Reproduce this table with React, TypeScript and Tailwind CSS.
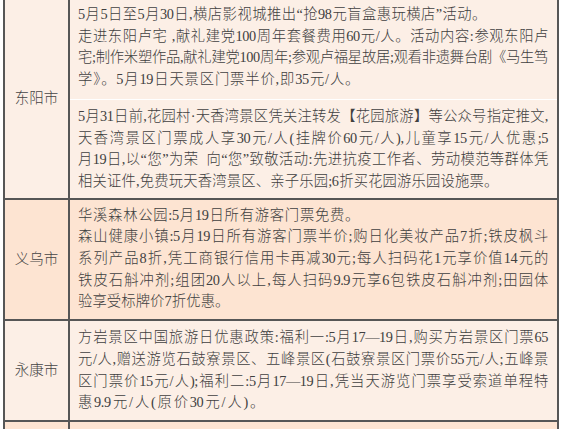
import React from 'react';

// w: width of a short (last) line so that it ends where the printed one ends
type Line = { text: string; full?: boolean; w?: string };

const FONT = '"Liberation Serif", "Noto Sans CJK SC", serif';

function Lines({ lines }: { lines: Line[] }) {
  return (
    <>
      {lines.map((l, i) => (
        <div
          key={i}
          className={`whitespace-nowrap leading-[21.7px] text-justify [text-align-last:justify] tracking-[-0.4px] ${l.w ?? ''}`}
        >
          {l.text}
        </div>
      ))}
    </>
  );
}

const dongyangA: Line[] = [
  { text: '5月5日至5月30日,横店影视城推出“抢98元盲盒惠玩横店”活动。', w: 'w-[408px]' },
  { text: '走进东阳卢宅 ,献礼建党100周年套餐费用60元/人。活动内容:参观东阳卢', full: true },
  { text: '宅;制作米塑作品,献礼建党100周年;参观卢福星故居;观看非遗舞台剧《马生笃', full: true },
  { text: '学》。5月19日天景区门票半价,即35元/人。', w: 'w-[281px]' },
];

const dongyangB: Line[] = [
  { text: '5月31日前,花园村·天香湾景区凭关注转发【花园旅游】等公众号指定推文,', full: true },
  { text: '天香湾景区门票成人享30元/人(挂牌价60元/人),儿童享15元/人优惠;5', full: true },
  { text: '月19日,以“您”为荣\u00a0\u00a0向“您”致敬活动:先进抗疫工作者、劳动模范等群体凭', full: true },
  { text: '相关证件,免费玩天香湾景区、亲子乐园;6折买花园游乐园设施票。', w: 'w-[420px]' },
];

const yiwu: Line[] = [
  { text: '华溪森林公园:5月19日所有游客门票免费。', w: 'w-[281px]' },
  { text: '森山健康小镇:5月19日所有游客门票半价;购日化美妆产品7折;铁皮枫斗', full: true },
  { text: '系列产品8折,凭工商银行信用卡再减30元;每人扫码花1元享价值14元的', full: true },
  { text: '铁皮石斛冲剂;组团20人以上,每人扫码9.9元享6包铁皮石斛冲剂;田园体', full: true },
  { text: '验享受标牌价7折优惠。', w: 'w-[151px]' },
];

const yongkang: Line[] = [
  { text: '方岩景区中国旅游日优惠政策:福利一:5月17—19日,购买方岩景区门票65', full: true },
  { text: '元/人,赠送游览石鼓寮景区、五峰景区(石鼓寮景区门票价55元/人;五峰景', full: true },
  { text: '区门票价15元/人);福利二:5月17—19日,凭当天游览门票享受索道单程特', full: true },
  { text: '惠9.9元/人(原价30元/人)。', w: 'w-[186px]' },
];

function City({ name }: { name: string }) {
  return (
    <div className="w-[65px] shrink-0 border-r-2 border-[#565656] flex items-center justify-center text-[14.5px] text-[#454545]">
      {name}
    </div>
  );
}

export default function App() {
  return (
    <div className="w-[565px] h-[429px] overflow-hidden bg-white text-[#404040] font-light" style={{ fontFamily: FONT }}>
      <div className="ml-[3px] w-[556px] border-x-2 border-[#565656] text-[14.3px]">
        {/* 东阳市 */}
        <div className="flex bg-[#fcefe6] border-b-2 border-[#565656]">
          <City name="东阳市" />
          <div className="flex-1 min-w-0">
            <div className="pl-[8px] pr-[9px] pt-[4px] pb-[8px]">
              <Lines lines={dongyangA} />
            </div>
            <div className="h-px bg-white" />
            <div className="pl-[8px] pr-[9px] pt-[6px] pb-[5px]">
              <Lines lines={dongyangB} />
            </div>
          </div>
        </div>

        {/* 义乌市 */}
        <div className="flex bg-[#fde4d2] border-b-2 border-[#565656]">
          <City name="义乌市" />
          <div className="flex-1 min-w-0 pl-[8px] pr-[9px] pt-[5px] pb-[6px]">
            <Lines lines={yiwu} />
          </div>
        </div>

        {/* 永康市 */}
        <div className="flex bg-[#fcefe6] border-b-2 border-[#565656]">
          <City name="永康市" />
          <div className="flex-1 min-w-0 pl-[8px] pr-[9px] pt-[6px] pb-[6px]">
            <Lines lines={yongkang} />
          </div>
        </div>

        <div className="flex bg-[#fde4d2] h-[40px]">
          <div className="w-[65px] shrink-0 border-r-2 border-[#565656]" />
          <div className="flex-1" />
        </div>
      </div>
    </div>
  );
}
